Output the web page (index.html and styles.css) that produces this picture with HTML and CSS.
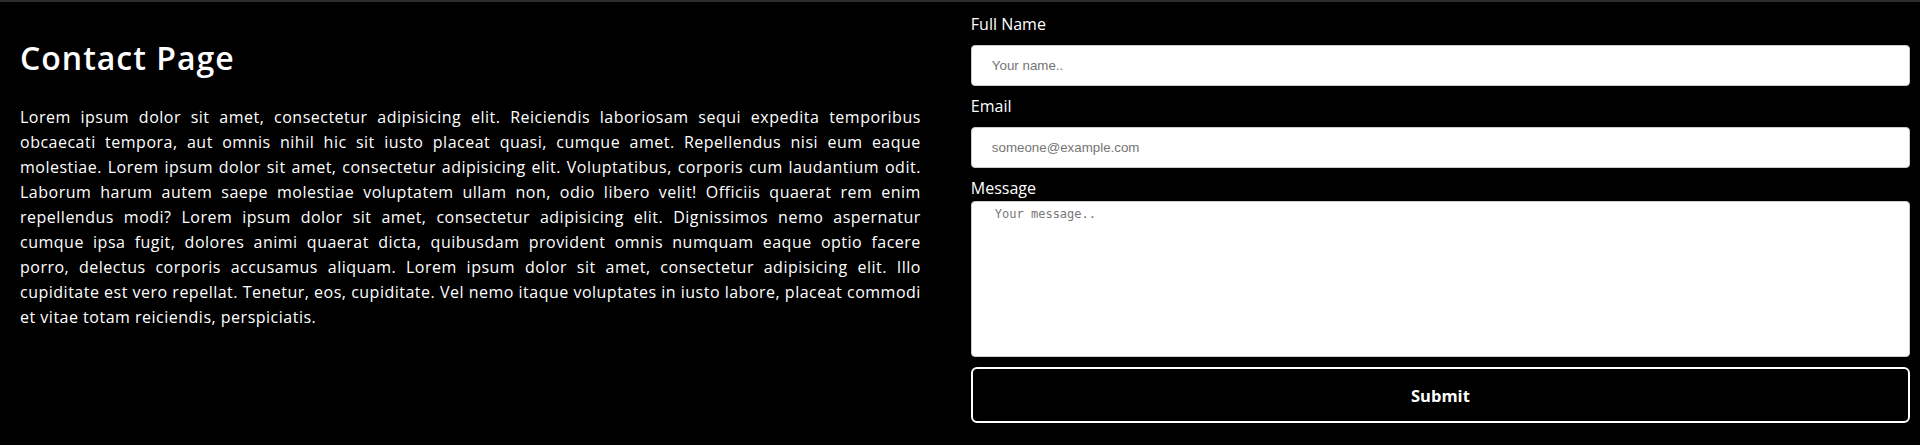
FILE: index.html
```html
<!DOCTYPE html>
<html lang="en">
<head>
<meta charset="utf-8">
<title>Contact Page</title>
<link rel="stylesheet" href="styles.css">
</head>
<body>
<main class="page">
  <section class="intro">
    <h1 class="title">Contact Page</h1>
    <p class="text">
      <span class="ln">Lorem ipsum dolor sit amet, consectetur adipisicing elit. Reiciendis laboriosam sequi expedita temporibus</span>
      <span class="ln">obcaecati tempora, aut omnis nihil hic sit iusto placeat quasi, cumque amet. Repellendus nisi eum eaque</span>
      <span class="ln">molestiae. Lorem ipsum dolor sit amet, consectetur adipisicing elit. Voluptatibus, corporis cum laudantium odit.</span>
      <span class="ln">Laborum harum autem saepe molestiae voluptatem ullam non, odio libero velit! Officiis quaerat rem enim</span>
      <span class="ln">repellendus modi? Lorem ipsum dolor sit amet, consectetur adipisicing elit. Dignissimos nemo aspernatur</span>
      <span class="ln">cumque ipsa fugit, dolores animi quaerat dicta, quibusdam provident omnis numquam eaque optio facere</span>
      <span class="ln">porro, delectus corporis accusamus aliquam. Lorem ipsum dolor sit amet, consectetur adipisicing elit. Illo</span>
      <span class="ln">cupiditate est vero repellat. Tenetur, eos, cupiditate. Vel nemo itaque voluptates in iusto labore, placeat commodi</span>
      <span class="ln ln-last">et vitae totam reiciendis, perspiciatis.</span>
    </p>
  </section>
  <form class="form">
    <label class="label" for="name">Full Name</label>
    <input class="field" id="name" type="text" placeholder="Your name..">
    <label class="label" for="email">Email</label>
    <input class="field" id="email" type="email" placeholder="someone@example.com">
    <label class="label" for="msg">Message</label>
    <textarea class="area" id="msg" placeholder="Your message.."></textarea>
    <button class="submit" type="button">Submit</button>
  </form>
</main>
</body>
</html>
```

FILE: styles.css
```css
html, body {
  margin: 0;
  padding: 0;
  background: #000;
}

body {
  border-top: 2px solid #2d2d2d;
  color: #fff;
  font-family: "Open Sans", "Noto Sans", sans-serif;
}

.page {
  display: flex;
  gap: 50px;
  padding: 0 10px 0 20px;
}

.intro {
  flex: 0 0 900px;
  padding-top: 36px;
}

.title {
  margin: 0;
  font-size: 32px;
  line-height: 40px;
  font-weight: 600;
  letter-spacing: 1px;
}

.text {
  margin: 27px 0 0;
  font-size: 16px;
  line-height: 25px;
  letter-spacing: 0.5px;
}

.ln {
  display: block;
  white-space: nowrap;
  text-align: justify;
  text-align-last: justify;
}

.ln-last {
  text-align-last: left;
}

.form {
  flex: 1;
  display: flex;
  flex-direction: column;
  padding-top: 10px;
}

.label {
  display: block;
  font-size: 16px;
  line-height: 24px;
  font-weight: 500;
}

.field {
  box-sizing: border-box;
  height: 41px;
  margin: 9px 0 8px;
  padding: 12px 20px;
  border: 1px solid #ccc;
  border-radius: 4px;
  background: #fff;
  font-family: "Liberation Sans", Arial, sans-serif;
  font-size: 13.333px;
  color: #000;
}

.field::placeholder {
  color: #757575;
}

.area {
  box-sizing: border-box;
  height: 156px;
  margin: 1px 0 0;
  padding: 5px 23px;
  border: 1px solid #ccc;
  border-radius: 4px;
  background: #fff;
  resize: none;
  font-family: "DejaVu Sans Mono", "Liberation Mono", monospace;
  font-size: 12px;
  color: #000;
}

.area::placeholder {
  color: #777;
}

.submit {
  box-sizing: border-box;
  height: 56px;
  margin-top: 10px;
  border: 2px solid #fff;
  border-radius: 6px;
  background: #000;
  color: #fff;
  font-family: "Open Sans", "Noto Sans", sans-serif;
  font-size: 16.5px;
  font-weight: 700;
}
```
